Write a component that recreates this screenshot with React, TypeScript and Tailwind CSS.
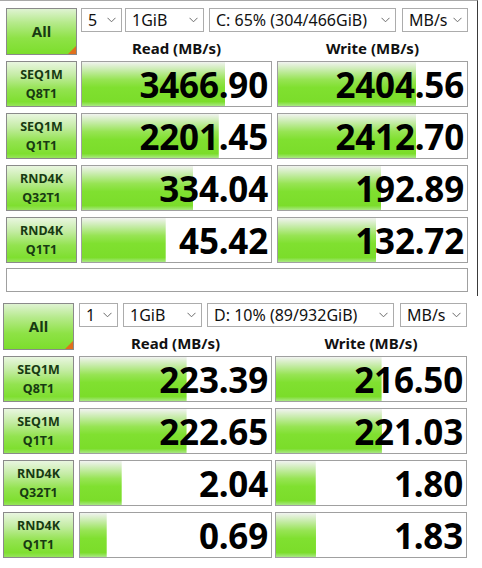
import React from "react";

type Row = {l1: string; l2: string; read: string; write: string};

type PanelCfg = {
    box: string; // outer padding / frame / height
    label: string; // width of the label column
    read: string; // read column width + gap before it
    write: string; // write column width + gap before it
    readW: string;
    writeW: string;
    comment: string;
    selects: {text: string; cls: string}[];
    rows: Row[];
};

const panels: PanelCfg[] = [
    {
        box: "h-[296px] w-[478px] pl-[6px] pt-[7px] border-t border-t-[#a8a8a8] border-r border-r-[#3a3a3a]",
        label: "w-[71px]",
        read: "ml-[4px]",
        write: "ml-[5px]",
        readW: "w-[191px]",
        writeW: "w-[191px]",
        comment: "w-[462px]",
        selects: [
            {text: "5", cls: "w-[41px]"},
            {text: "1GiB", cls: "w-[79px] ml-[3px]"},
            {text: "C: 65% (304/466GiB)", cls: "w-[187px] ml-[5px]"},
            {text: "MB/s", cls: "w-[66px] ml-[6px]"},
        ],
        rows: [
            {l1: "SEQ1M", l2: "Q8T1", read: "3466.90", write: "2404.56"},
            {l1: "SEQ1M", l2: "Q1T1", read: "2201.45", write: "2412.70"},
            {l1: "RND4K", l2: "Q32T1", read: "334.04", write: "192.89"},
            {l1: "RND4K", l2: "Q1T1", read: "45.42", write: "132.72"},
        ],
    },
    {
        box: "h-[272px] w-full pl-[3px] pt-[7px]",
        label: "w-[71px]",
        read: "ml-[5px]",
        write: "ml-[3px]",
        readW: "w-[193px]",
        writeW: "w-[192px]",
        comment: "",
        selects: [
            {text: "1", cls: "w-[39px]"},
            {text: "1GiB", cls: "w-[79px] ml-[5px]"},
            {text: "D: 10% (89/932GiB)", cls: "w-[187px] ml-[5px]"},
            {text: "MB/s", cls: "w-[67px] ml-[6px]"},
        ],
        rows: [
            {l1: "SEQ1M", l2: "Q8T1", read: "223.39", write: "216.50"},
            {l1: "SEQ1M", l2: "Q1T1", read: "222.65", write: "221.03"},
            {l1: "RND4K", l2: "Q32T1", read: "2.04", write: "1.80"},
            {l1: "RND4K", l2: "Q1T1", read: "0.69", write: "1.83"},
        ],
    },
];

// same log scale the meter uses: 10x score over 6 decades
const meter = (v: string) => Math.max(0, Math.min(100, (Math.log10(parseFloat(v) * 10) / 6) * 100));

const Chevron = () => (
    <svg width="9" height="6" viewBox="0 0 9 6" className="shrink-0">
        <polyline points="0.5,0.8 4.5,4.8 8.5,0.8" fill="none" stroke="#6b6b6b" strokeWidth="1"/>
    </svg>
);

const Select = ({text, cls}: {text: string; cls: string}) => (
    <div className={"h-[24px] border border-[#acacac] bg-white flex items-center justify-between pl-[6px] pr-[5px] text-[16px] text-[#111] leading-none " + cls}>
        <span className="whitespace-nowrap">{text}</span>
        <Chevron/>
    </div>
);

const Score = ({value, cls}: {value: string; cls: string}) => (
    <div
        className={"h-[46px] border border-[#a0a0a0] bg-white bg-no-repeat bg-[linear-gradient(to_bottom,#f1f3f0_0%,#c8ecac_18%,#97e454_40%,#80e030_58%,#7bdd2a_90%,#a9e884_100%)] flex items-center justify-end pr-[3px] " + cls}
        style={{backgroundSize: `${meter(value)}% 100%`}}
    >
        <span className="text-[35px] font-bold leading-none text-black tracking-[-0.2px]">{value}</span>
    </div>
);

const Label = ({l1, l2, cls}: {l1: string; l2: string; cls: string}) => (
    <div className={"h-[46px] border border-[#8a8a8a] bg-[linear-gradient(to_bottom,#e9f6e0_0%,#c4eca4_30%,#93e350_62%,#7fdf30_90%,#96e45a_100%)] flex flex-col items-center justify-center text-[12.5px] font-bold leading-[19px] text-[#173a12] " + cls}>
        <span>{l1}</span>
        <span>{l2}</span>
    </div>
);

const Panel = ({cfg}: {cfg: PanelCfg}) => (
    <div className={"bg-white flex flex-col " + cfg.box}>
        {/* header: All button + selectors + column titles */}
        <div className="flex h-[53px]">
            <div className={"relative h-[47px] border border-[#8a8a8a] bg-[linear-gradient(to_bottom,#dff3d2_0%,#b6ea8c_30%,#8ee246_65%,#7cde2c_100%)] flex items-center justify-center text-[15px] font-bold text-[#173a12] " + cfg.label}>
                All
                <div className="absolute right-0 bottom-0 w-0 h-0 border-l-[8px] border-l-transparent border-b-[8px] border-b-[#e0701e]"/>
            </div>
            <div className={"flex flex-col " + cfg.read}>
                <div className="flex">
                    {cfg.selects.map((s) => (
                        <Select key={s.text} text={s.text} cls={s.cls}/>
                    ))}
                </div>
                <div className="flex flex-1 items-end pb-[3px] text-[15px] font-bold text-[#111] leading-[20px]">
                    <div className={"text-center " + cfg.readW}>Read (MB/s)</div>
                    <div className={"text-center " + cfg.writeW + " " + cfg.write}>Write (MB/s)</div>
                </div>
            </div>
        </div>

        <div className="flex flex-col gap-[6px]">
            {cfg.rows.map((r) => (
                <div key={r.l1 + r.l2} className="flex">
                    <Label l1={r.l1} l2={r.l2} cls={cfg.label}/>
                    <Score value={r.read} cls={cfg.readW + " " + cfg.read}/>
                    <Score value={r.write} cls={cfg.writeW + " " + cfg.write}/>
                </div>
            ))}
        </div>

        {cfg.comment && (
            <div className={"mt-[5px] h-[24px] border border-[#a0a0a0] bg-white " + cfg.comment}/>
        )}
    </div>
);

export default function App() {
    return (
        <div className="w-[482px] h-[568px] overflow-hidden bg-white flex flex-col font-['Noto_Sans','Open_Sans',sans-serif]">
            {panels.map((p, i) => (
                <Panel key={i} cfg={p}/>
            ))}
        </div>
    );
}
